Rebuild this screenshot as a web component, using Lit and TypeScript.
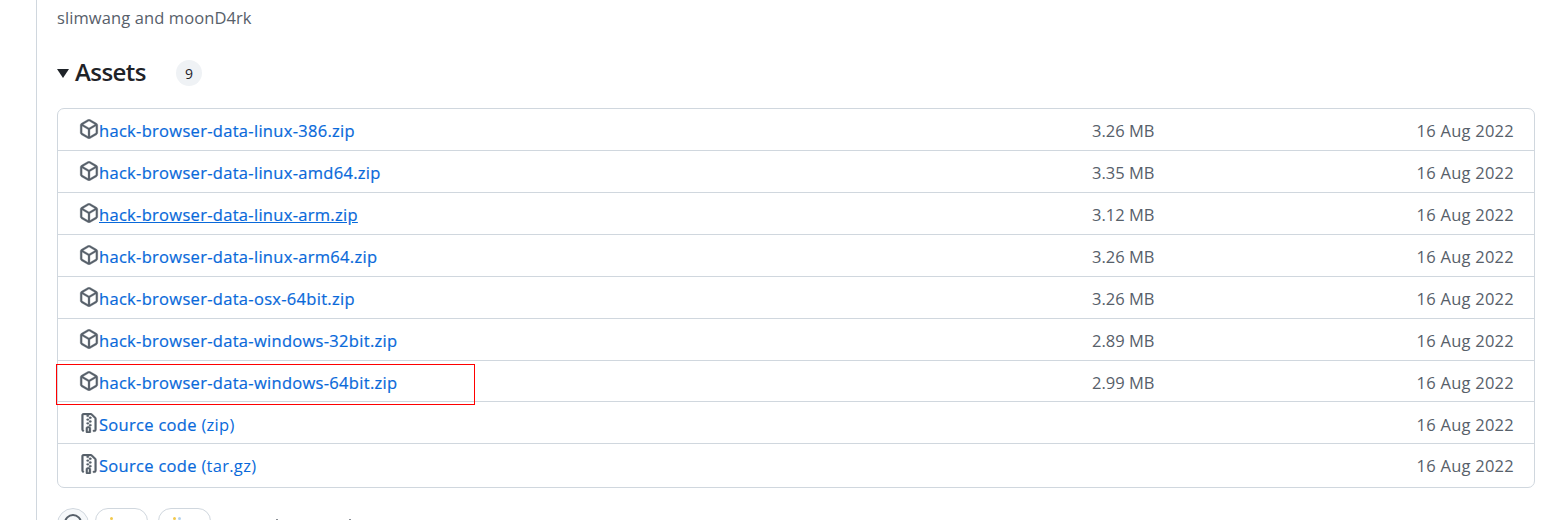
import { LitElement, html, css, svg } from "lit";
import { customElement } from "lit/decorators.js";

const pkg = svg`<path fill-rule="evenodd" d="m8.878.392 5.25 3.045c.54.314.872.89.872 1.514v6.098a1.75 1.75 0 0 1-.872 1.514l-5.25 3.045a1.75 1.75 0 0 1-1.756 0l-5.25-3.045A1.75 1.75 0 0 1 1 11.049V4.951c0-.624.332-1.201.872-1.514L7.122.392a1.75 1.75 0 0 1 1.756 0ZM7.875 1.69l-4.63 2.685L8 7.133l4.755-2.758-4.63-2.685a.248.248 0 0 0-.25 0ZM2.5 5.677v5.372c0 .09.047.171.125.216l4.625 2.683V8.432Zm6.25 8.271 4.625-2.683a.25.25 0 0 0 .125-.216V5.677L8.75 8.432Z"/>`;
const zip = svg`<path fill-rule="evenodd" d="M3.5 1.75v11.5c0 .09.048.173.126.217a.75.75 0 0 1-.752 1.298A1.748 1.748 0 0 1 2 13.25V1.75C2 .784 2.784 0 3.75 0h5.586c.464 0 .909.185 1.237.513l2.914 2.914c.329.328.513.773.513 1.237v8.586A1.75 1.75 0 0 1 12.25 15h-.5a.75.75 0 0 1 0-1.5h.5a.25.25 0 0 0 .25-.25V4.664a.25.25 0 0 0-.073-.177L9.513 1.573a.25.25 0 0 0-.177-.073H7.25a.75.75 0 0 1 0 1.5h-.5a.75.75 0 0 1 0-1.5h-3a.25.25 0 0 0-.25.25Zm3.75 8.75h.5c.966 0 1.75.784 1.75 1.75v3a.75.75 0 0 1-.75.75h-2.5a.75.75 0 0 1-.75-.75v-3c0-.966.784-1.75 1.75-1.75ZM6 5.25a.75.75 0 0 1 .75-.75h.5a.75.75 0 0 1 0 1.5h-.5A.75.75 0 0 1 6 5.25Zm.75 2.25h.5a.75.75 0 0 1 0 1.5h-.5a.75.75 0 0 1 0-1.5ZM8 6.75A.75.75 0 0 1 8.75 6h.5a.75.75 0 0 1 0 1.5h-.5A.75.75 0 0 1 8 6.75ZM8.75 3h.5a.75.75 0 0 1 0 1.5h-.5a.75.75 0 0 1 0-1.5ZM8 9.75A.75.75 0 0 1 8.75 9h.5a.75.75 0 0 1 0 1.5h-.5A.75.75 0 0 1 8 9.75Zm-1 2.5v2.25h1v-2.25a.25.25 0 0 0-.25-.25h-.5a.25.25 0 0 0-.25.25Z"/>`;

const files = [
  ["hack-browser-data-linux-386.zip", "3.26 MB"],
  ["hack-browser-data-linux-amd64.zip", "3.35 MB"],
  ["hack-browser-data-linux-arm.zip", "3.12 MB"],
  ["hack-browser-data-linux-arm64.zip", "3.26 MB"],
  ["hack-browser-data-osx-64bit.zip", "3.26 MB"],
  ["hack-browser-data-windows-32bit.zip", "2.89 MB"],
  ["hack-browser-data-windows-64bit.zip", "2.99 MB"],
];

@customElement("app-root")
export class AppRoot extends LitElement {
  static styles = css`
    :host { display: block; height: 520px; overflow: hidden; background: #fff; font-family: "Open Sans", "Noto Sans", sans-serif; color: #1f2328; }
    .main { margin-left: 36px; border-left: 1px solid #d0d7de; height: 520px; padding: 7px 15px 0 20px; box-sizing: border-box; width: 1514px; }
    .authors { font-size: 16.5px; line-height: 22px; color: #57606a; letter-spacing: 0.1px; }
    .head { display: flex; align-items: center; margin-top: 23px; height: 40px; }
    .caret { width: 0; height: 0; border-left: 6px solid transparent; border-right: 6px solid transparent; border-top: 9px solid #1f2328; margin-right: 6px; margin-top: 2px; }
    h3 { margin: 0; font-size: 24px; font-weight: 550; letter-spacing: -0.55px; line-height: 30px; }
    .count { margin-left: 30px; width: 26px; height: 26px; border-radius: 13px; background: #eff2f5; font-size: 14px; display: flex; align-items: center; justify-content: center; margin-top: 2px; }
    .box { margin-top: 16px; border: 1px solid #d0d7de; border-radius: 7px; width: 1478px; box-sizing: border-box; }
    .row { display: flex; align-items: center; height: 42px; box-sizing: border-box; padding: 2px 20px 0 21px; font-size: 16.5px; letter-spacing: 0.25px; }
    .row + .row { border-top: 1px solid #d0d7de; }
    .row:first-child { height: 41px; }
    .row.hl { position: relative; height: 41px; padding-top: 3px; }
    .row.src { padding-top: 4px; }
    .row.last { height: 44px; padding-top: 0; }
    .icon { width: 20px; height: 20px; fill: #57606a; stroke: #57606a; stroke-width: 0.25; flex: none; margin: -4px 0 0 0; }
    .name { flex: none; width: 993px; color: #0969da; text-decoration: none; font-weight: 500; letter-spacing: 0.3px; -webkit-text-stroke: 0.2px #0969da; white-space: nowrap; }
    .name.u { text-decoration: underline; }
    .name .light { font-weight: 400; -webkit-text-stroke: 0; }
    .size { flex: none; width: 62px; text-align: right; color: #57606a; white-space: nowrap; letter-spacing: 0; }
    .date { flex: 1; text-align: right; color: #57606a; white-space: nowrap; }
    .mark { position: absolute; left: -2px; top: 3px; width: 419px; height: 41px; border: 1px solid #f00; box-sizing: border-box; }
    .reactions { display: flex; margin-top: 20px; }
    .smile { width: 32px; height: 32px; border-radius: 50%; background: #f6f8fa; border: 1px solid #d0d7de; box-sizing: border-box; display: flex; justify-content: center; padding-top: 5px; }
    .smile i { display: block; width: 18px; height: 18px; border: 2px solid #57606a; border-radius: 50%; box-sizing: border-box; }
    .pill { width: 53px; height: 26px; border: 1px solid #d0d7de; border-radius: 13px; box-sizing: border-box; margin-left: 6px; display: flex; gap: 2px; padding: 8px 0 0 14px; }
    .pill + .pill { margin-left: 10px; }
    .dot { width: 3px; height: 3px; border-radius: 50%; background: #f2c94c; }
    .dot.blue { background: #b5d3ee; }
    .tick { width: 2px; height: 1px; margin: 11px 0 0 65px; background: #8a8f96; }
    .tick + .tick { margin-left: 71px; }
  `;

  render() {
    return html`<div class="main">
      <div class="authors">slimwang and moonD4rk</div>
      <div class="head"><span class="caret"></span><h3>Assets</h3><span class="count">9</span></div>
      <div class="box">
        ${files.map(([n, s], i) => html`<div class="row ${i === 6 ? "hl" : ""}">
          <svg class="icon" viewBox="0 0 16 16">${pkg}</svg>
          <a class="name ${i === 2 ? "u" : ""}">${n}</a>
          <span class="size">${s}</span>
          <span class="date">16 Aug 2022</span>
          ${i === 6 ? html`<span class="mark"></span>` : ""}
        </div>`)}
        ${["(zip)", "(tar.gz)"].map((e, i) => html`<div class="row ${i === 1 ? "last" : "src"}">
          <svg class="icon" viewBox="0 0 16 16">${zip}</svg>
          <a class="name">Source code <span class="light">${e}</span></a>
          <span class="size"></span>
          <span class="date">16 Aug 2022</span>
        </div>`)}
      </div>
      <div class="reactions">
        <div class="smile"><i></i></div>
        <div class="pill"><span class="dot"></span></div>
        <div class="pill"><span class="dot"></span><span class="dot blue"></span></div>
        <span class="tick"></span><span class="tick"></span>
      </div>
    </div>`;
  }
}
